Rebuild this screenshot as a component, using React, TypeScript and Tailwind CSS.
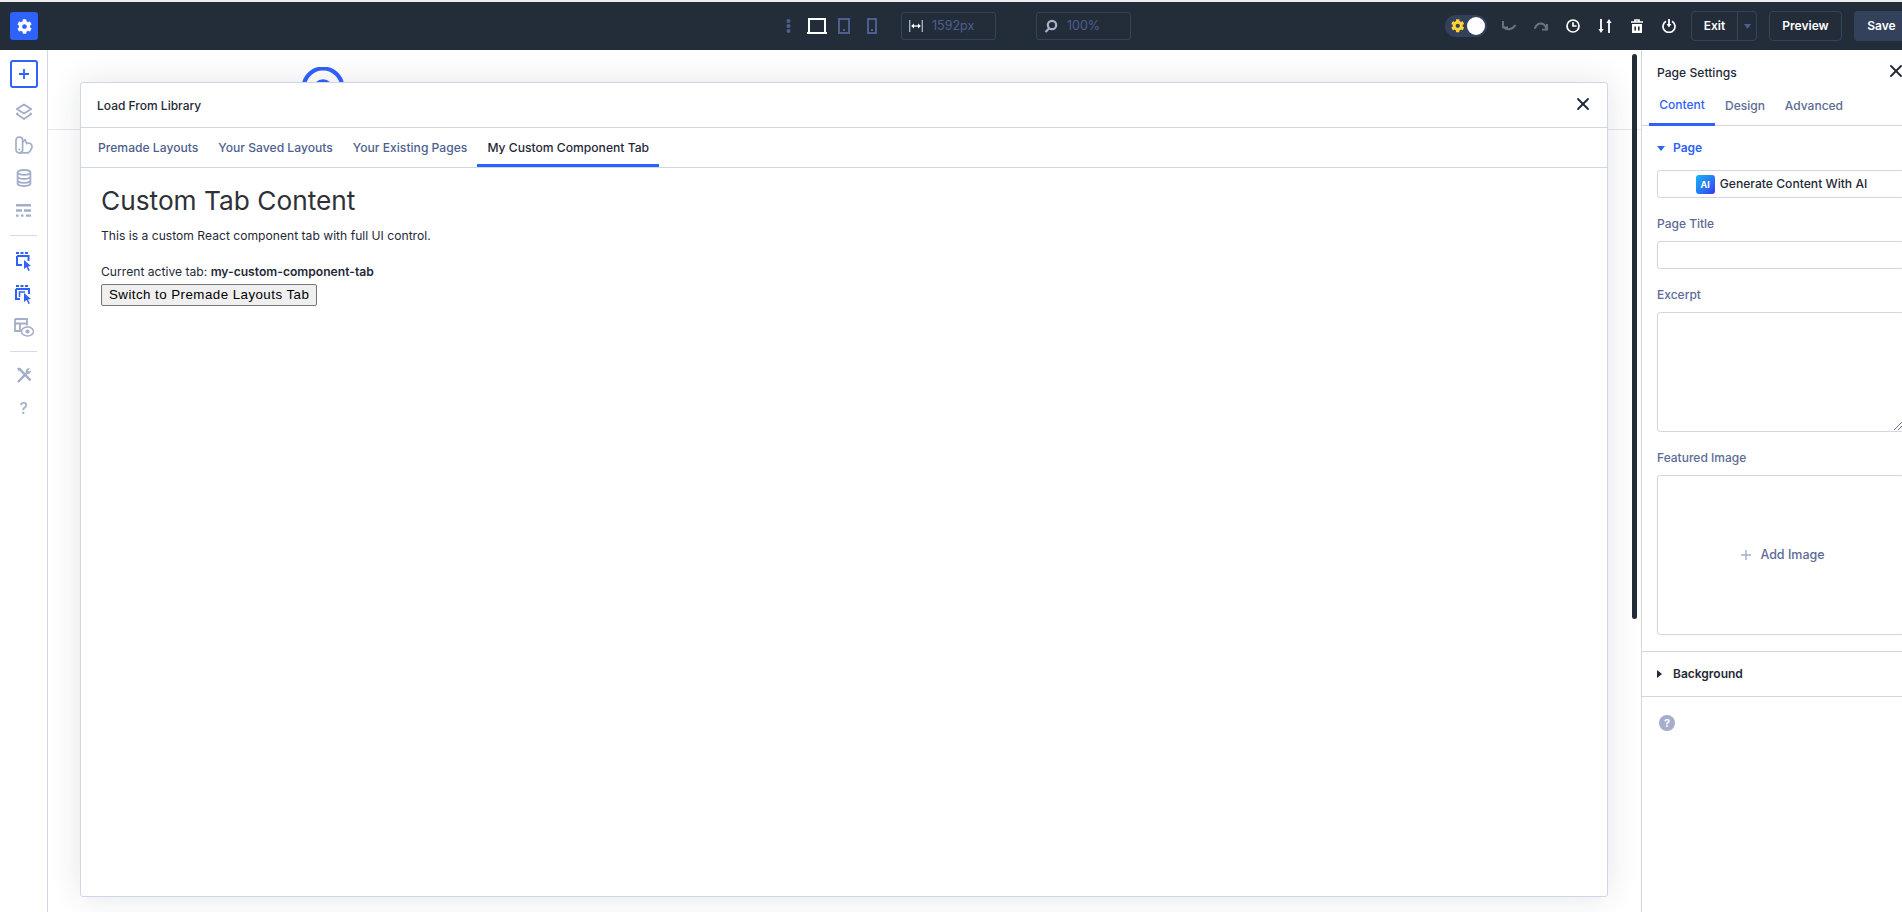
import React from "react";
import { FaCog } from "react-icons/fa";
import { X } from "lucide-react";

const Ic = ({ w = 20, h = 20, vb = "0 0 20 20", children, className = "" }: any) => (
  <svg width={w} height={h} viewBox={vb} fill="none" className={className}>{children}</svg>
);
const G = "#a4aeca";
const B = "#2f62fb";

function SideIcon({ children }: any) {
  return <div className="flex h-[33px] w-full items-center justify-center">{children}</div>;
}

function Sidebar() {
  return (
    <aside className="flex w-[48px] shrink-0 flex-col items-center border-r border-[#cfd6e6] bg-white pt-[10px]">
      <div className="mb-[7px] flex h-[28px] w-[28px] items-center justify-center rounded-[3px] border-2 border-[#2f62fb]">
        <Ic w={12} h={12} vb="0 0 12 12"><path d="M6 1v10M1 6h10" stroke={B} strokeWidth="1.8" /></Ic>
      </div>
      <SideIcon>
        <Ic w={18} h={18} vb="0 0 18 18"><path d="M9 1.5 16.2 6 9 10.5 1.8 6z" stroke={G} strokeWidth="1.8" strokeLinejoin="round" /><path d="M3 9.8 1.8 11 9 16l7.2-5-1.2-1.2" stroke={G} strokeWidth="1.8" strokeLinejoin="round" /></Ic>
      </SideIcon>
      <SideIcon>
        <Ic w={18} h={18} vb="0 0 18 18"><rect x="1" y="1.2" width="6.6" height="15.6" rx="3" stroke={G} strokeWidth="1.7" /><path d="M7.6 6.2 10 3.6 11.8 7.6c1-.9 3.2-.8 4.4.6 1.4 1.8.6 4.6-.9 6.6-.7 1-1.3 2-3 2H4" stroke={G} strokeWidth="1.7" strokeLinejoin="round" /><circle cx="4.4" cy="13.6" r="1" fill={G} /></Ic>
      </SideIcon>
      <SideIcon>
        <Ic w={16} h={18} vb="0 0 16 18"><ellipse cx="8" cy="3.4" rx="6.4" ry="2.4" stroke={G} strokeWidth="1.8" /><path d="M1.6 3.4v11.2c0 1.3 2.9 2.4 6.4 2.4s6.4-1.1 6.4-2.4V3.4M1.6 7.6c0 1.3 2.9 2.4 6.4 2.4s6.4-1.1 6.4-2.4M1.6 11.4c0 1.3 2.9 2.4 6.4 2.4s6.4-1.1 6.4-2.4" stroke={G} strokeWidth="1.8" /></Ic>
      </SideIcon>
      <SideIcon>
        <Ic w={15} h={13} vb="0 0 15 13"><path d="M0 1.2h15M0 6.5h6M8 6.5h7M0 11.6h2.5M5 11.6h2.5M10 11.6h5" stroke={G} strokeWidth="2.4" /></Ic>
      </SideIcon>
      <div className="mb-[7px] mt-[8px] h-px w-[27px] bg-[#d5dae6]" />
      <div className="mt-[2px] w-full">
        <SideIcon>
          <Ic w={16} h={20} vb="0 0 16 20"><path d="M0 1h3M4.5 1h3M9 1h3" stroke={B} strokeWidth="2" /><path d="M1 4h11.5v5M1 4v9h5" stroke={B} strokeWidth="2" /><path d="M8 8l7 6-3 .4 1.8 4-1.4.6-1.8-4L8 17z" fill={B} /></Ic>
        </SideIcon>
      </div>
      <SideIcon>
        <Ic w={18} h={20} vb="0 0 18 20"><path d="M1 1h3M5.5 1h3M10 1h3" stroke={B} strokeWidth="2" /><path d="M1 4h13v5M1 4v10h4" stroke={B} strokeWidth="2" /><path d="M4.5 12V7H10" stroke={B} strokeWidth="1.6" /><path d="M9 8l7 6-3 .4 1.8 4-1.4.6-1.8-4L9 17z" fill={B} /></Ic>
      </SideIcon>
      <SideIcon>
        <Ic w={20} h={19} vb="0 0 20 19"><path d="M1 1h12v6.5M1 1v12h6M1 5.5h12M6 5.5V13" stroke={G} strokeWidth="1.8" /><ellipse cx="13.5" cy="13.5" rx="6" ry="4.5" fill="#fff" stroke={G} strokeWidth="1.5" /><circle cx="13.5" cy="13.5" r="2.1" fill={G} /></Ic>
      </SideIcon>
      <div className="mb-[6px] mt-[7px] h-px w-[27px] bg-[#d5dae6]" />
      <SideIcon>
        <Ic w={16} h={16} vb="0 0 16 16"><path d="M2 15 10.4 6.4M3 1.4 14.5 13.4" stroke={G} strokeWidth="2.4" /><path d="M9.8 5.6c-.6-2.4 1.6-4.8 4.2-4.2L12 3.4l1 1.4 1.8-1.6c.6 2.6-2 4.6-4.2 3.6zM1 1.6 3 .6l1.6 1.6-1.8 2z" fill={G} /></Ic>
      </SideIcon>
      <div className="flex h-[34px] w-full items-center justify-center pt-px">
        <span className="text-[15.5px] font-medium leading-none text-[#a4aeca]">?</span>
      </div>
    </aside>
  );
}

function Header() {
  const hs = "flex h-[30px] items-center justify-center rounded-[4px] border border-[#34435c] text-[12px] font-semibold text-white";
  return (
    <header className="grid h-[48px] shrink-0 grid-cols-[1fr_auto_1fr] items-center bg-[#232d3a] pl-[10px] pr-[10px]">
      <div className="flex">
        <div className="flex h-[28px] w-[28px] items-center justify-center rounded-[3px] bg-[#2f62fb]">
          <FaCog className="text-[15px] text-white" />
        </div>
      </div>
      <div className="mr-[2px] flex items-center">
        <Ic w={5} h={14} vb="0 0 5 14" className="mr-[16px]"><circle cx="2.5" cy="2" r="2" fill="#4e5f8f" /><circle cx="2.5" cy="7" r="2" fill="#4e5f8f" /><circle cx="2.5" cy="12" r="2" fill="#4e5f8f" /></Ic>
        <Ic w={20} h={16} vb="0 0 20 16" className="mr-[11px]"><path d="M2 15V1h16v14M0 15h20" stroke="#fff" strokeWidth="2" /></Ic>
        <Ic w={12} h={16} vb="0 0 12 16" className="mr-[17px]"><rect x="1" y="1" width="10" height="14" stroke="#4e5f8f" strokeWidth="2" /><rect x="5" y="11" width="2" height="2" fill="#4e5f8f" /></Ic>
        <Ic w={10} h={16} vb="0 0 10 16" className="mr-[24px]"><rect x="1" y="1" width="8" height="14" stroke="#4e5f8f" strokeWidth="2" /><rect x="4" y="11" width="2" height="2" fill="#4e5f8f" /></Ic>
        <div className="flex h-[28px] w-[95px] items-center rounded-[3px] border border-[#34435c] pl-[7px]">
          <Ic w={14} h={14} vb="0 0 14 14"><path d="M.7 1v12M13.3 1v12" stroke="#a9b3cc" strokeWidth="1.3" /><path d="M4 7h6" stroke="#fff" strokeWidth="1.3" /><path d="M2.2 7l2.8-2.6v5.2zM11.8 7 9 4.4v5.2z" fill="#fff" /></Ic>
          <span className="ml-[9px] text-[12.5px] text-[#4e5f8f]">1592px</span>
        </div>
        <div className="ml-[40px] flex h-[28px] w-[95px] items-center rounded-[3px] border border-[#34435c] pl-[7px]">
          <Ic w={14} h={14} vb="0 0 14 14"><circle cx="8" cy="6" r="4.2" stroke="#a9b3cc" strokeWidth="2.2" /><path d="M5 9.5 1.5 13" stroke="#a9b3cc" strokeWidth="2.2" /></Ic>
          <span className="ml-[9px] text-[12.5px] text-[#4e5f8f]">100%</span>
        </div>
      </div>
      <div className="flex items-center justify-end">
        <div className="flex h-[22px] w-[42px] items-center justify-between rounded-full bg-[#33415a] pl-[6px] pr-[2px]">
          <FaCog className="text-[13.5px] text-[#fcd535]" />
          <div className="h-[18px] w-[18px] rounded-full bg-white" />
        </div>
        <Ic w={14} h={10} vb="0 0 14 10" className="ml-[15px]"><path d="M1 0v6.4h5" stroke="#6a7483" strokeWidth="1.9" /><path d="M1.5 6c3 3.2 8 3.4 12-1.8" stroke="#6a7483" strokeWidth="1.9" /></Ic>
        <Ic w={14} h={10} vb="0 0 14 10" className="ml-[18px]"><path d="M13 3v5.6H8" stroke="#6a7483" strokeWidth="1.9" /><path d="M12.5 8C10.5 1.5 4 0 .5 7.8" stroke="#6a7483" strokeWidth="1.9" /></Ic>
        <Ic w={14} h={14} vb="0 0 14 14" className="ml-[18px]"><circle cx="7" cy="7" r="6" stroke="#fff" strokeWidth="1.7" /><path d="M7 3.2V7h3.6" stroke="#fff" strokeWidth="1.7" /></Ic>
        <Ic w={14} h={14} vb="0 0 14 14" className="ml-[18px]"><path d="M3 0v12M11 2v12" stroke="#fff" strokeWidth="1.8" /><path d="M.4 10 3 14l2.6-4zM8.4 4 11 0l2.6 4z" fill="#fff" /></Ic>
        <Ic w={12} h={14} vb="0 0 12 14" className="ml-[19px]"><path d="M0 3h12M4 3V1h4v2" stroke="#fff" strokeWidth="1.6" /><path d="M1 5h10v9H1z" fill="#fff" /><path d="M4.2 7.5v4M7.8 7.5v4" stroke="#232d3a" strokeWidth="1.6" /></Ic>
        <Ic w={14} h={14} vb="0 0 14 14" className="ml-[19px]"><path d="M4 2.2a6 6 0 1 0 6 0" stroke="#fff" strokeWidth="1.7" /><path d="M7 0v6" stroke="#fff" strokeWidth="1.8" /><path d="M4.6 5 7 8.4 9.4 5z" fill="#fff" /></Ic>
        <div className="ml-[15px] flex h-[30px] w-[66px] rounded-[4px] border border-[#34435c] text-[12px] font-semibold text-white">
          <div className="flex w-[46px] items-center justify-center border-r border-[#34435c]">Exit</div>
          <div className="flex flex-1 items-center justify-center">
            <Ic w={7} h={5} vb="0 0 7 5"><path d="M0 0h7L3.5 5z" fill="#4e5f8f" /></Ic>
          </div>
        </div>
        <div className={`${hs} ml-[12px] w-[73px]`}>Preview</div>
        <div className="ml-[12px] flex h-[30px] w-[55px] items-center justify-center rounded-[4px] bg-[#33415a] text-[12px] font-semibold text-white">Save</div>
      </div>
    </header>
  );
}

function Tab({ children, active }: any) {
  return (
    <div className={`flex h-full items-center border-b-[3px] px-[10px] pt-[4px] text-[12.13px] font-medium ${active ? "border-[#2f62fb] text-[#1f2937]" : "border-transparent text-[#4e5f8f]"}`}>
      {children}
    </div>
  );
}

function Modal() {
  return (
    <div className="absolute left-[32px] top-[32px] flex h-[815px] w-[1528px] flex-col rounded-[3px] border border-[#cfd6e6] bg-white shadow-[0_0_32px_rgba(30,40,70,0.12)]">
      <div className="flex h-[45px] shrink-0 items-center justify-between border-b border-[#cfd6e6] pl-[16px] pr-[14px]">
        <span className="mt-[2px] text-[12px] font-medium text-[#1f2937]">Load From Library</span>
        <X size={20} strokeWidth={2.2} className="mb-[2px] text-[#1f2937]" />
      </div>
      <div className="flex h-[40px] shrink-0 border-b border-[#cfd6e6] pl-[7px]">
        <Tab>Premade Layouts</Tab>
        <Tab>Your Saved Layouts</Tab>
        <Tab>Your Existing Pages</Tab>
        <Tab active>My Custom Component Tab</Tab>
      </div>
      <div className="flex flex-col items-start pl-[20px] pt-[16px] text-[#1f2937]">
        <h2 className="text-[26.25px] font-normal leading-[34px] text-[#2e3138]">Custom Tab Content</h2>
        <p className="mt-[9px] text-[12.13px] leading-[18px]">This is a custom React component tab with full UI control.</p>
        <p className="mt-[18px] text-[12.13px] leading-[18px]">Current active tab: <b className="font-semibold">my-custom-component-tab</b></p>
        <button className="mt-[3px] h-[22px] rounded-[2px] border border-[#767676] bg-[#efefef] px-[7px] font-['Liberation_Sans',sans-serif] text-[13.33px] leading-none tracking-[0.45px] text-black">Switch to Premade Layouts Tab</button>
      </div>
    </div>
  );
}

function Canvas() {
  return (
    <main className="relative flex-1 overflow-hidden bg-white">
      <div className="h-[80px] border-b border-[#e4e7ef]">
        <div className="ml-[254px] pt-[17px]">
          <Ic w={42} h={42} vb="0 0 42 42"><circle cx="21" cy="21" r="19.5" stroke={B} strokeWidth="4" /><circle cx="21" cy="22" r="8" stroke={B} strokeWidth="3.5" /></Ic>
        </div>
      </div>
      <Modal />
      <div className="absolute left-[1584px] top-[4px] h-[565px] w-[5px] rounded-full bg-[#232d3a]" />
    </main>
  );
}

const Label = ({ children, className = "" }: any) => (
  <div className={`text-[12px] font-medium leading-[16px] text-[#5c6b96] ${className}`}>{children}</div>
);

function Panel() {
  return (
    <aside className="flex w-[278px] shrink-0 flex-col border-l border-[#cfd6e6] bg-white">
      <div className="flex h-[42px] shrink-0 items-end justify-between pb-[11px] pl-[15px] pr-[13px]">
        <span className="text-[12.13px] font-medium leading-[16px] text-[#1f2937]">Page Settings</span>
        <X size={20} strokeWidth={2.2} className="text-[#1f2937]" />
      </div>
      <div className="flex h-[34px] shrink-0 border-b border-[#cfd6e6] pl-[7px] text-[12px] font-medium">
        <div className="-mb-px flex w-[66px] items-center justify-center border-b-[3px] border-[#2f62fb] pb-[6px] text-[#2f62fb]">Content</div>
        <div className="ml-[10px] flex items-center pb-[6px] text-[#5c6b96]">Design</div>
        <div className="ml-[20px] flex items-center pb-[6px] text-[#5c6b96]">Advanced</div>
      </div>
      <div className="border-b border-[#cfd6e6] px-[15px] pb-[16px]">
        <div className="flex h-[44px] items-center">
          <Ic w={8} h={5} vb="0 0 8 5"><path d="M0 0h8L4 5z" fill={B} /></Ic>
          <span className="ml-[8px] text-[12px] font-semibold text-[#2f62fb]">Page</span>
        </div>
        <div className="flex h-[28px] items-center justify-center rounded-[3px] border border-[#cfd6e6] pl-[2px]">
          <div className="flex h-[19px] w-[19px] items-center justify-center rounded-[3px] bg-gradient-to-br from-[#10b5f5] to-[#3a2bf0] text-[9px] font-bold leading-none text-white">AI</div>
          <span className="ml-[5px] text-[12.13px] font-medium text-[#1f2937]">Generate Content With AI</span>
        </div>
        <Label className="mt-[18px]">Page Title</Label>
        <div className="mt-[9px] h-[28px] rounded-[3px] border border-[#cfd6e6]" />
        <Label className="mt-[18px]">Excerpt</Label>
        <div className="relative mt-[9px] h-[120px] rounded-[3px] border border-[#cfd6e6]">
          <Ic w={8} h={8} vb="0 0 8 8" className="absolute bottom-[1px] right-[1px]"><path d="M0 8l8-8M4 8l4-4" stroke="#555" strokeWidth="0.8" /></Ic>
        </div>
        <Label className="mt-[18px]">Featured Image</Label>
        <div className="mt-[9px] flex h-[160px] items-center justify-center rounded-[3px] border border-[#cfd6e6] pl-[5px]">
          <Ic w={10} h={10} vb="0 0 10 10"><path d="M5 0v10M0 5h10" stroke={G} strokeWidth="1.4" /></Ic>
          <span className="ml-[9px] text-[12.5px] font-medium text-[#5c6b96]">Add Image</span>
        </div>
      </div>
      <div className="flex h-[45px] items-center border-b border-[#cfd6e6] pl-[15px]">
        <Ic w={5} h={8} vb="0 0 5 8"><path d="M0 0v8l5-4z" fill="#1f2937" /></Ic>
        <span className="ml-[11px] text-[12px] font-semibold text-[#1f2937]">Background</span>
      </div>
      <div className="pl-[17px] pt-[18px]">
        <div className="flex h-[16px] w-[16px] items-center justify-center rounded-full bg-[#a4aeca] text-[11px] font-bold leading-none text-white">?</div>
      </div>
    </aside>
  );
}

export default function App() {
  return (
    <div className="h-[912px] w-[1902px] overflow-hidden">
      <div className="flex h-[912px] w-[1919px] flex-col border-t-2 border-[#eeeeee] bg-white font-['Inter',sans-serif]">
        <Header />
        <div className="flex min-h-0 flex-1">
          <Sidebar />
          <Canvas />
          <Panel />
        </div>
      </div>
    </div>
  );
}
